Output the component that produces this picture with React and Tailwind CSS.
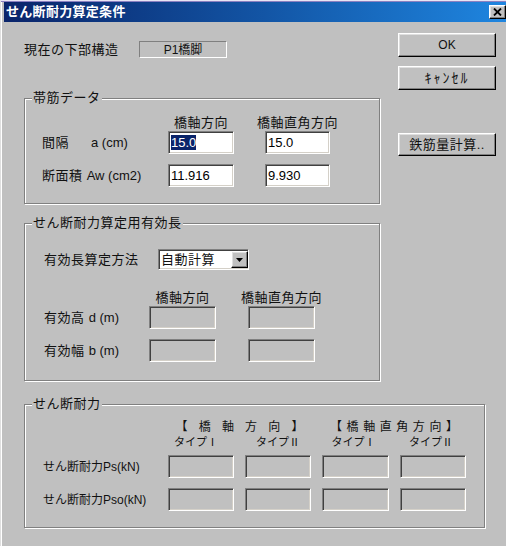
import React from "react";

const sunken =
  "border border-t-[#808080] border-l-[#808080] border-b-white border-r-white shadow-[inset_1px_1px_0_#404040,inset_-1px_-1px_0_#d4d0c8]";
const raised =
  "border border-t-white border-l-white border-b-black border-r-black shadow-[inset_-1px_-1px_0_#808080,inset_1px_1px_0_#dfdfdf]";

function Field({ value, selected, disabled, w = "w-[66px]" }) {
  return (
    <div
      className={`${sunken} ${w} h-[23px] ${disabled ? "bg-[#c0c0c0]" : "bg-white"} flex items-center pl-[2px] text-[13px] tracking-normal text-black`}
    >
      {value ? (
        selected ? (
          <span className="bg-[#0a246a] text-white leading-[15px]">{value}</span>
        ) : (
          <span>{value}</span>
        )
      ) : null}
    </div>
  );
}

function Group({ title, className, children }) {
  return (
    <fieldset
      className={`border border-[#808080] shadow-[inset_1px_1px_0_#ffffff,1px_1px_0_#ffffff] ${className}`}
    >
      <legend className="ml-[7px] px-[1px] bg-[#c0c0c0] leading-[16px] text-[13px] tracking-[0.5px]">
        {title}
      </legend>
      {children}
    </fieldset>
  );
}

function Button({ children, className = "" }) {
  return (
    <div
      className={`${raised} bg-[#c0c0c0] w-[98px] flex items-center justify-center text-[12px] ${className}`}
    >
      {children}
    </div>
  );
}

function Center({ children, className = "" }) {
  return (
    <div className={`flex justify-center whitespace-nowrap ${className}`}>
      {children}
    </div>
  );
}

export default function App() {
  return (
    <div className="w-[506px] h-[546px] overflow-hidden bg-[#c0c0c0] font-['Liberation_Sans','Noto_Sans_CJK_JP',sans-serif] text-[#111] leading-[16px]">
      <div className="w-[508px] h-[546px] border-t border-l border-t-[#e8e4f4] border-l-[#dfdfdf]">
        <div className="h-[1px] bg-[#8a80c0]" />
        <div className="pl-[2px] border-l border-l-white h-full">
          {/* title bar */}
          <div className="h-[20px] bg-gradient-to-r from-[#0a246a] to-[#1f86e0] flex items-center justify-between">
            <span className="pl-[2px] text-white font-bold text-[13px] tracking-[0.3px]">
              せん断耐力算定条件
            </span>
            <div
              className={`${raised} bg-[#c0c0c0] w-[17px] h-[14px] mr-[2px] flex items-center justify-center`}
            >
              <svg width="9" height="8" viewBox="0 0 9 8">
                <path d="M1 0.5 L8 7.5 M8 0.5 L1 7.5" stroke="#000" strokeWidth="1.8" />
              </svg>
            </div>
          </div>

          {/* body */}
          <div className="pl-[20px]">
            <div className="flex">
              {/* left column */}
              <div className="w-[356px] flex flex-col">
                <div className="flex items-center mt-[19px] h-[17px]">
                  <span className="w-[115px] text-[13px] tracking-[0.5px]">現在の下部構造</span>
                  <div className="w-[88px] h-[17px] border border-t-[#808080] border-l-[#808080] border-b-white border-r-white flex items-center justify-center text-[12px]">
                    P1橋脚
                  </div>
                </div>

                {/* group 1 */}
                <Group title="帯筋データ" className="mt-[32px] h-[114px]">
                  <div className="pl-[17px] text-[13px] tracking-[0.5px]">
                    <div className="grid grid-cols-[95px_66px_65px] gap-x-[31px] mt-[9px] h-[16px]">
                      <div />
                      <Center>橋軸方向</Center>
                      <Center>橋軸直角方向</Center>
                    </div>
                    <div className="grid grid-cols-[95px_66px_65px] gap-x-[31px] items-center">
                      <span className="whitespace-nowrap">
                        間隔<span className="ml-[22px] tracking-normal">a (cm)</span>
                      </span>
                      <Field value="15.0" selected />
                      <Field value="15.0" w="w-[65px]" />
                    </div>
                    <div className="grid grid-cols-[95px_66px_65px] gap-x-[31px] items-center mt-[10px]">
                      <span className="whitespace-nowrap">
                        断面積 <span className="tracking-normal">Aw (cm2)</span>
                      </span>
                      <Field value="11.916" />
                      <Field value="9.930" w="w-[65px]" />
                    </div>
                  </div>
                </Group>

                {/* group 2 */}
                <Group title="せん断耐力算定用有効長" className="mt-[11px] h-[166px]">
                  <div className="pl-[19px] text-[13px] tracking-[0.5px]">
                    <div className="flex items-center mt-[18px]">
                      <span className="w-[114px]">有効長算定方法</span>
                      <div
                        className={`${sunken} bg-white w-[91px] h-[21px] flex items-center justify-between`}
                      >
                        <span className="pl-[2px]">自動計算</span>
                        <div
                          className={`${raised} bg-[#c0c0c0] w-[17px] h-[17px] flex items-center justify-center`}
                        >
                          <svg width="7" height="4" viewBox="0 0 7 4">
                            <path d="M0 0 H7 L3.5 4 Z" fill="#000" />
                          </svg>
                        </div>
                      </div>
                    </div>
                    <div className="grid grid-cols-[73px_67px_67px] gap-x-[32px] mt-[20px] h-[16px]">
                      <div />
                      <Center>橋軸方向</Center>
                      <Center>橋軸直角方向</Center>
                    </div>
                    <div className="grid grid-cols-[73px_67px_67px] gap-x-[32px] items-center">
                      <span className="whitespace-nowrap">
                        有効高 <span className="tracking-normal">d (m)</span>
                      </span>
                      <Field disabled w="w-[67px]" />
                      <Field disabled w="w-[67px]" />
                    </div>
                    <div className="grid grid-cols-[73px_67px_67px] gap-x-[32px] items-center mt-[10px]">
                      <span className="whitespace-nowrap">
                        有効幅 <span className="tracking-normal">b (m)</span>
                      </span>
                      <Field disabled w="w-[67px]" />
                      <Field disabled w="w-[67px]" />
                    </div>
                  </div>
                </Group>
              </div>

              {/* right column */}
              <div className="ml-[18px] flex flex-col">
                <Button className="mt-[11px] h-[24px]">OK</Button>
                <Button className="mt-[9px] h-[24px] text-[14px] tracking-[2px]">ｷｬﾝｾﾙ</Button>
                <Button className="mt-[43px] h-[23px] text-[13px] tracking-[0.5px]">鉄筋量計算..</Button>
              </div>
            </div>

            {/* group 3 */}
            <Group title="せん断耐力" className="mt-[15px] h-[132px] w-[461px]">
              <div className="pl-[18px] text-[13px]">
                <div className="grid grid-cols-[114px_66px_66px_67px_66px] gap-x-[11px] mt-[7px] h-[15px] text-[12px]">
                  <div />
                  <div className="col-span-2 flex justify-center">
                    <div className="w-[128px] flex justify-between">
                      {["【", "橋", "軸", "方", "向", "】"].map((c, i) => (
                        <span key={i}>{c}</span>
                      ))}
                    </div>
                  </div>
                  <div className="col-span-2 flex justify-center">
                    <div className="w-[128px] flex justify-between">
                      {["【", "橋", "軸", "直", "角", "方", "向", "】"].map((c, i) => (
                        <span key={i}>{c}</span>
                      ))}
                    </div>
                  </div>
                </div>
                <div className="grid grid-cols-[114px_66px_66px_67px_66px] gap-x-[11px] h-[16px] text-[11px] items-center">
                  <div />
                  <Center className="pr-[10px]">タイプⅠ</Center>
                  <Center>タイプⅡ</Center>
                  <Center className="pr-[4px]">タイプⅠ</Center>
                  <Center className="pr-[4px]">タイプⅡ</Center>
                </div>
                <div className="grid grid-cols-[114px_66px_66px_67px_66px] gap-x-[11px] items-center mt-[5px]">
                  <span className="whitespace-nowrap text-[12px]">せん断耐力Ps(kN)</span>
                  <Field disabled />
                  <Field disabled />
                  <Field disabled w="w-[67px]" />
                  <Field disabled />
                </div>
                <div className="grid grid-cols-[114px_66px_66px_67px_66px] gap-x-[11px] items-center mt-[10px]">
                  <span className="whitespace-nowrap text-[12px]">せん断耐力Pso(kN)</span>
                  <Field disabled />
                  <Field disabled />
                  <Field disabled w="w-[67px]" />
                  <Field disabled />
                </div>
              </div>
            </Group>
          </div>
        </div>
      </div>
    </div>
  );
}
